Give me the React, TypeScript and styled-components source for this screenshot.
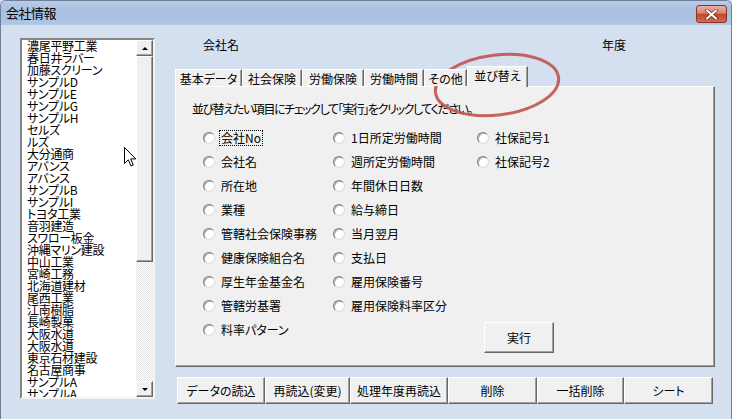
import React from 'react'
import styled, { createGlobalStyle } from 'styled-components'

const uiFont = `"Noto Sans CJK JP", "Noto Sans", sans-serif`

const GlobalStyle = createGlobalStyle`
  html, body {
    margin: 0;
    padding: 0;
    background: #d4dff0;
  }
  body {
    font-family: ${uiFont};
    font-size: 12px;
    color: #000;
    font-feature-settings: "palt";
  }
  * { box-sizing: border-box; }
`

const companies = [
  '濃尾平野工業', '春日井ラバー', '加藤スクリーン', 'サンプルD', 'サンプルE', 'サンプルG',
  'サンプルH', 'セルズ', 'ルズ', '大分通商', 'アバンス', 'アバンス', 'サンプルB', 'サンプルI',
  'トヨタ工業', '音羽建造', 'スワロー板金', '沖縄マリン建設', '中山工業', '宮崎工務',
  '北海道建材', '尾西工業', '江南樹脂', '長崎製菓', '大阪水道', '大阪水道', '東京石材建設',
  '名古屋商事', 'サンプルA', 'サンプルA',
]

const tabs = [
  { label: '基本データ', width: 67 },
  { label: '社会保険', width: 60 },
  { label: '労働保険', width: 62 },
  { label: '労働時間', width: 60 },
  { label: 'その他', width: 43 },
  { label: '並び替え', width: 61, active: true },
]

const columns = [
  {
    width: 130,
    items: ['会社No', '会社名', '所在地', '業種', '管轄社会保険事務', '健康保険組合名', '厚生年金基金名', '管轄労基署', '料率パターン'],
  },
  {
    width: 144,
    items: ['1日所定労働時間', '週所定労働時間', '年間休日日数', '給与締日', '当月翌月', '支払日', '雇用保険番号', '雇用保険料率区分'],
  },
]

const footerButtons = [
  { label: 'データの読込', width: 88 },
  { label: '再読込(変更)', width: 85 },
  { label: '処理年度再読込', width: 98 },
  { label: '削除', width: 89 },
  { label: '一括削除', width: 87 },
  { label: 'シート', width: 89 },
]

const raised = `
  background: #f0f0f0;
  border: 1px solid;
  border-color: #ffffff #696969 #696969 #ffffff;
  box-shadow: inset -1px -1px 0 #a0a0a0;
`

const Window = styled.div`
  position: relative;
  width: 732px;
  height: 419px;
  overflow: hidden;
  background: #d4dff0;
  border: 1px solid #6d7f99;
  border-bottom: none;
  border-radius: 6px 6px 0 0;
`

const TitleBar = styled.div`
  height: 24px;
  display: flex;
  align-items: center;
  justify-content: space-between;
  padding: 0 4px 0 5px;
  background: linear-gradient(to bottom, #b9cce8 0%, #a7bfe0 40%, #afc5e4 100%);
`

const Title = styled.div`
  font-size: 13px;
  line-height: 16px;
  letter-spacing: -0.5px;
`

const CloseButton = styled.div`
  width: 31px;
  height: 18px;
  margin-top: 2px;
  display: flex;
  align-items: center;
  justify-content: center;
  border: 1px solid #8a3424;
  border-radius: 3px;
  background: linear-gradient(to bottom, #eab0a2 0%, #d9836f 45%, #c24630 52%, #d06c52 100%);
`

const Body = styled.div`
  display: flex;
  gap: 20px;
  padding: 13px 0 0 19px;
`

const ListBox = styled.div`
  width: 135px;
  height: 361px;
  display: flex;
  background: #fff;
  border: 2px solid;
  border-color: #858585 #f4f4f4 #f4f4f4 #858585;
`

const ListItems = styled.div`
  flex: 1;
  overflow: hidden;
  padding: 0 0 0 5px;
`

const ListItem = styled.div`
  height: 12px;
  line-height: 12px;
  white-space: nowrap;
  letter-spacing: -0.3px;
`

const ScrollBar = styled.div`
  width: 17px;
  display: flex;
  flex-direction: column;
`

const ScrollButton = styled.div`
  ${raised}
  height: 16px;
  display: flex;
  align-items: center;
  justify-content: center;
`

const Arrow = styled.div<{ $down?: boolean }>`
  width: 0;
  height: 0;
  border-left: 3px solid transparent;
  border-right: 3px solid transparent;
  ${(p) => (p.$down ? 'border-top: 3px solid #000;' : 'border-bottom: 3px solid #000;')}
`

const Thumb = styled.div`
  ${raised}
  height: 206px;
`

const Track = styled.div`
  flex: 1;
  background: repeating-conic-gradient(#ffffff 0 25%, #e2e2e2 0 50%) 0 0 / 2px 2px;
`

const Main = styled.div`
  width: 540px;
  display: flex;
  flex-direction: column;
`

const Header = styled.div`
  height: 28px;
  display: flex;
`

const HeaderCell = styled.div<{ $width?: number; $indent?: number }>`
  width: ${(p) => (p.$width ? `${p.$width}px` : 'auto')};
  padding-left: ${(p) => p.$indent ?? 0}px;
  line-height: 14px;
`

const TabStrip = styled.div`
  height: 20px;
  display: flex;
  align-items: flex-end;
  position: relative;
  z-index: 1;
`

const Tab = styled.div<{ $width: number; $active?: boolean }>`
  width: ${(p) => p.$width}px;
  height: ${(p) => (p.$active ? 21 : 17)}px;
  margin-bottom: ${(p) => (p.$active ? -1 : 0)}px;
  display: flex;
  align-items: center;
  justify-content: center;
  padding-bottom: ${(p) => (p.$active ? 3 : 0)}px;
  background: #f0f0f0;
  border-top: 1px solid #fff;
  border-left: 1px solid #fff;
  border-right: 1px solid #696969;
  box-shadow: inset -1px 0 0 #a0a0a0;
  white-space: nowrap;
`

const Panel = styled.div`
  ${raised}
  height: 281px;
  padding: 15px 0 0 16px;
`

const Instruction = styled.div`
  line-height: 14px;
  letter-spacing: -1.4px;
  white-space: nowrap;
`

const Options = styled.div`
  display: flex;
  margin: 10px 0 0 11px;
`

const OptionColumn = styled.div<{ $width?: number }>`
  width: ${(p) => (p.$width ? `${p.$width}px` : 'auto')};
  display: flex;
  flex-direction: column;
`

const Option = styled.label`
  height: 24px;
  display: flex;
  align-items: center;
  gap: 5px;
  white-space: nowrap;
`

const Radio = styled.span`
  width: 12px;
  height: 12px;
  border-radius: 50%;
  background: #fff;
  border: 1px solid;
  border-color: #7c7c7c #dcdcdc #dcdcdc #7c7c7c;
  box-shadow: inset 1px 1px 0 #b4b4b4;
  flex: none;
`

const OptionText = styled.span<{ $focused?: boolean }>`
  line-height: 14px;
  padding: 0 1px;
  outline: ${(p) => (p.$focused ? '1px dotted #000' : 'none')};
`

const RunButton = styled.div`
  ${raised}
  width: 70px;
  height: 31px;
  margin: 148px 0 0 7px;
  display: flex;
  align-items: center;
  justify-content: center;
`

const ButtonRow = styled.div`
  display: flex;
  margin: 10px 0 0 2px;
`

const FormButton = styled.div<{ $width: number }>`
  ${raised}
  width: ${(p) => p.$width}px;
  height: 27px;
  display: flex;
  align-items: center;
  justify-content: center;
  white-space: nowrap;
`

const Annotation = styled.svg`
  position: absolute;
  left: 428px;
  top: 47px;
  pointer-events: none;
`

const Pointer = styled.svg`
  position: absolute;
  left: 122px;
  top: 145px;
  pointer-events: none;
`

function RadioOption({ label, focused }: { label: string; focused?: boolean }) {
  return (
    <Option>
      <Radio />
      <OptionText $focused={focused}>{label}</OptionText>
    </Option>
  )
}

export default function App() {
  return (
    <>
      <GlobalStyle />
      <Window>
        <TitleBar>
          <Title>会社情報</Title>
          <CloseButton>
            <svg width="13" height="11" viewBox="0 0 13 11">
              <path d="M2 1.5 L11 9.5 M11 1.5 L2 9.5" stroke="#6b2418" strokeWidth="3.6" strokeLinecap="round" />
              <path d="M2 1.5 L11 9.5 M11 1.5 L2 9.5" stroke="#fff" strokeWidth="2.2" strokeLinecap="round" />
            </svg>
          </CloseButton>
        </TitleBar>

        <Body>
          <ListBox>
            <ListItems>
              {companies.map((name, i) => (
                <ListItem key={i}>{name}</ListItem>
              ))}
            </ListItems>
            <ScrollBar>
              <ScrollButton><Arrow /></ScrollButton>
              <Thumb />
              <Track />
              <ScrollButton><Arrow $down /></ScrollButton>
            </ScrollBar>
          </ListBox>

          <Main>
            <Header>
              <HeaderCell $width={427} $indent={28}>会社名</HeaderCell>
              <HeaderCell>年度</HeaderCell>
            </Header>

            <TabStrip>
              {tabs.map((t) => (
                <Tab key={t.label} $width={t.width} $active={t.active}>{t.label}</Tab>
              ))}
            </TabStrip>

            <Panel>
              <Instruction>並び替えたい項目にチェックして「実行」をクリックしてください。</Instruction>
              <Options>
                {columns.map((col, ci) => (
                  <OptionColumn key={ci} $width={col.width}>
                    {col.items.map((item, i) => (
                      <RadioOption key={item} label={item} focused={ci === 0 && i === 0} />
                    ))}
                  </OptionColumn>
                ))}
                <OptionColumn>
                  <RadioOption label="社保記号1" />
                  <RadioOption label="社保記号2" />
                  <RunButton>実行</RunButton>
                </OptionColumn>
              </Options>
            </Panel>

            <ButtonRow>
              {footerButtons.map((b) => (
                <FormButton key={b.label} $width={b.width}>{b.label}</FormButton>
              ))}
            </ButtonRow>
          </Main>
        </Body>

        <Annotation width="138" height="76" viewBox="0 0 138 76">
          <ellipse cx="68" cy="37" rx="62" ry="30" transform="rotate(-7 68 37)"
            fill="none" stroke="#bf5350" strokeWidth="3" opacity="0.9" />
        </Annotation>

        <Pointer width="14" height="22" viewBox="0 0 14 22">
          <path d="M1.5 1.5 L1.5 17.5 L5.3 13.8 L8 20 L10.3 19 L7.7 12.9 L12.8 12.9 Z"
            fill="#fff" stroke="#000" strokeWidth="1" strokeLinejoin="miter" />
        </Pointer>
      </Window>
    </>
  )
}
